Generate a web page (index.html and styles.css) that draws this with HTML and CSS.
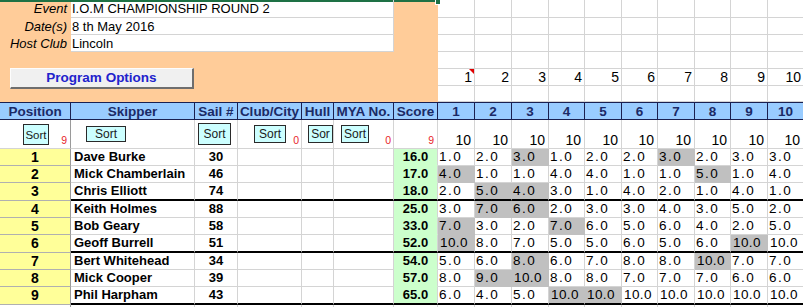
FILE: index.html
```html
<!DOCTYPE html>
<html lang="en">
<head>
<meta charset="utf-8">
<title>I.O.M Championship Round 2</title>
<link rel="stylesheet" href="styles.css">
</head>
<body>
<div class="sheet">
  <div class="lbl sel">Event</div><div class="val sel">I.O.M CHAMPIONSHIP ROUND 2</div><div class="or c7 sel"></div>
  <div></div><div></div><div></div><div></div><div></div><div></div><div></div><div></div><div></div><div></div>
  <div class="lbl">Date(s)</div><div class="val">8 th May 2016</div>
  <div></div><div></div><div></div><div></div><div></div><div></div><div></div><div></div><div></div><div></div>
  <div class="lbl">Host Club</div><div class="val">Lincoln</div>
  <div></div><div></div><div></div><div></div><div></div><div></div><div></div><div></div><div></div><div></div>
  <div class="or bot"><button type="button" class="btn">Program Options</button></div>
  <div></div><div></div><div></div><div></div><div></div><div></div><div></div><div></div><div></div><div></div>
  <div class="rn cm">1</div><div class="rn">2</div><div class="rn">3</div><div class="rn">4</div><div class="rn">5</div><div class="rn">6</div><div class="rn">7</div><div class="rn">8</div><div class="rn">9</div><div class="rn">10</div>
  <div></div><div></div><div></div><div></div><div></div><div></div><div></div><div></div><div></div><div></div>

  <div class="row hd">
    <div>Position</div><div>Skipper</div><div>Sail #</div><div>Club/City</div><div>Hull</div><div>MYA No.</div><div>Score</div>
    <div>1</div><div>2</div><div>3</div><div>4</div><div>5</div><div>6</div><div>7</div><div>8</div><div>9</div><div>10</div>
  </div>

  <div class="row st">
    <div class="pc"><span class="sb b1">Sort</span><span class="rd">9</span></div>
    <div><span class="sb b2">Sort</span></div>
    <div><span class="sb b3">Sort</span></div>
    <div><span class="sb b4">Sort</span><span class="rd r2">0</span></div>
    <div><span class="sb b5">Sor</span></div>
    <div><span class="sb b6">Sort</span><span class="rd r2">0</span></div>
    <div><span class="rd">9</span></div>
    <div class="tn">10</div><div class="tn">10</div><div class="tn">10</div><div class="tn">10</div><div class="tn">10</div><div class="tn">10</div><div class="tn">10</div><div class="tn">10</div><div class="tn">10</div><div class="tn">10</div>
  </div>

  <div class="row dr">
    <div class="pos">1</div><div class="nm">Dave Burke</div><div class="sl">30</div><div></div><div></div><div></div><div class="sc">16.0</div>
    <div class="r">1.0</div><div class="r">2.0</div><div class="r gy">3.0</div><div class="r">1.0</div><div class="r">2.0</div><div class="r">2.0</div><div class="r gy">3.0</div><div class="r">2.0</div><div class="r">3.0</div><div class="r">3.0</div>
  </div>
  <div class="row dr">
    <div class="pos">2</div><div class="nm">Mick Chamberlain</div><div class="sl">46</div><div></div><div></div><div></div><div class="sc">17.0</div>
    <div class="r gy">4.0</div><div class="r">1.0</div><div class="r">1.0</div><div class="r">4.0</div><div class="r">4.0</div><div class="r">1.0</div><div class="r">1.0</div><div class="r gy">5.0</div><div class="r">1.0</div><div class="r">4.0</div>
  </div>
  <div class="row dr tk">
    <div class="pos">3</div><div class="nm">Chris Elliott</div><div class="sl">74</div><div></div><div></div><div></div><div class="sc">18.0</div>
    <div class="r">2.0</div><div class="r gy">5.0</div><div class="r gy">4.0</div><div class="r">3.0</div><div class="r">1.0</div><div class="r">4.0</div><div class="r">2.0</div><div class="r">1.0</div><div class="r">4.0</div><div class="r">1.0</div>
  </div>
  <div class="row dr">
    <div class="pos">4</div><div class="nm">Keith Holmes</div><div class="sl">88</div><div></div><div></div><div></div><div class="sc">25.0</div>
    <div class="r">3.0</div><div class="r gy">7.0</div><div class="r gy">6.0</div><div class="r">2.0</div><div class="r">3.0</div><div class="r">3.0</div><div class="r">4.0</div><div class="r">3.0</div><div class="r">5.0</div><div class="r">2.0</div>
  </div>
  <div class="row dr">
    <div class="pos">5</div><div class="nm">Bob Geary</div><div class="sl">58</div><div></div><div></div><div></div><div class="sc">33.0</div>
    <div class="r gy">7.0</div><div class="r">3.0</div><div class="r">2.0</div><div class="r gy">7.0</div><div class="r">6.0</div><div class="r">5.0</div><div class="r">6.0</div><div class="r">4.0</div><div class="r">2.0</div><div class="r">5.0</div>
  </div>
  <div class="row dr tk">
    <div class="pos">6</div><div class="nm">Geoff Burrell</div><div class="sl">51</div><div></div><div></div><div></div><div class="sc">52.0</div>
    <div class="r w gy">10.0</div><div class="r">8.0</div><div class="r">7.0</div><div class="r">5.0</div><div class="r">5.0</div><div class="r">6.0</div><div class="r">5.0</div><div class="r">6.0</div><div class="r w gy">10.0</div><div class="r w">10.0</div>
  </div>
  <div class="row dr">
    <div class="pos">7</div><div class="nm">Bert Whitehead</div><div class="sl">34</div><div></div><div></div><div></div><div class="sc">54.0</div>
    <div class="r">5.0</div><div class="r">6.0</div><div class="r gy">8.0</div><div class="r">6.0</div><div class="r">7.0</div><div class="r">8.0</div><div class="r">8.0</div><div class="r w gy">10.0</div><div class="r">7.0</div><div class="r">7.0</div>
  </div>
  <div class="row dr">
    <div class="pos">8</div><div class="nm">Mick Cooper</div><div class="sl">39</div><div></div><div></div><div></div><div class="sc">57.0</div>
    <div class="r">8.0</div><div class="r gy">9.0</div><div class="r w gy">10.0</div><div class="r">8.0</div><div class="r">8.0</div><div class="r">7.0</div><div class="r">7.0</div><div class="r">7.0</div><div class="r">6.0</div><div class="r">6.0</div>
  </div>
  <div class="row dr tk">
    <div class="pos">9</div><div class="nm">Phil Harpham</div><div class="sl">43</div><div></div><div></div><div></div><div class="sc">65.0</div>
    <div class="r">6.0</div><div class="r">4.0</div><div class="r">5.0</div><div class="r w gy">10.0</div><div class="r w gy">10.0</div><div class="r w">10.0</div><div class="r w">10.0</div><div class="r w">10.0</div><div class="r w">10.0</div><div class="r w">10.0</div>
  </div>
  <div class="row">
    <div class="pe"></div><div></div><div></div><div></div><div></div><div></div><div></div>
    <div></div><div></div><div></div><div></div><div></div><div></div><div></div><div></div><div></div><div></div>
  </div>
</div>
</body>
</html>
```
FILE: styles.css
```css
html, body {
  margin: 0;
  padding: 0;
  background: #fff;
  overflow: hidden;
}

body {
  font-family: "Liberation Sans", Arial, sans-serif;
  font-size: 13px;
  color: #000;
}

.sheet {
  display: grid;
  width: 804px;
  grid-template-columns: 71px 124px 43px 64px 32px 60px 44px 37px 37px 37px 36px 37px 36px 37px 36px 37px 36px;
  grid-template-rows: 18px 17px 17px 17px 17px 16px 18px 29px 17px 17px 18px 17px 17px 18px 17px 17px 18px 10px;
}

.row {
  display: contents;
}

.sheet > :not(.row),
.row > * {
  box-sizing: border-box;
  min-width: 0;
  overflow: hidden;
  white-space: nowrap;
  line-height: 16px;
  border-right: 1px solid #d4d4d4;
  border-bottom: 1px solid #d4d4d4;
}

/* ---------- top panel ---------- */
.sheet > .lbl {
  background: #ffcc99;
  border: none;
  text-align: right;
  font-style: italic;
  padding-right: 4px;
  line-height: 18px;
}

.sheet > .val {
  grid-column: span 5;
  background: #fff;
  padding-left: 1px;
  line-height: 18px;
}

.sheet > .or {
  background: #ffcc99;
  border: none;
}

.sheet > .c7 {
  grid-row: span 3;
  position: relative;
  overflow: visible;
}

.c7::after {
  content: "";
  position: absolute;
  top: 0;
  right: -3px;
  width: 4px;
  height: 4px;
  background: #1e7145;
  border: 1px solid #fff;
  border-top: none;
}

.sel {
  box-shadow: inset 0 2px 0 #1e7145;
}

.sheet > .bot {
  grid-column: span 7;
  grid-row: span 3;
}

.btn {
  display: block;
  box-sizing: border-box;
  margin: 16px 0 0 10px;
  width: 184px;
  height: 21px;
  padding: 0;
  background: #f0f0f0;
  border: none;
  border-top: 1px solid #fdfdfd;
  border-left: 1px solid #fdfdfd;
  border-right: 2px solid #6e6e6e;
  border-bottom: 2px solid #6e6e6e;
  font-family: "Liberation Sans", Arial, sans-serif;
  font-size: 13.5px;
  font-weight: bold;
  line-height: 18px;
  color: #2222cc;
  text-align: center;
}

.sheet > .rn {
  text-align: right;
  padding-right: 2px;
  font-size: 14px;
}

.sheet > .cm {
  position: relative;
}

.cm::after {
  content: "";
  position: absolute;
  top: 0;
  right: 0;
  border-top: 5px solid #e00000;
  border-left: 5px solid transparent;
}

/* ---------- header row ---------- */
.hd > * {
  background: #99ccff;
  border-top: 1px solid #1a2050;
  border-bottom: 1px solid #1a2050;
  border-right: 1px solid #1a2050;
  font-weight: bold;
  font-size: 13.5px;
  line-height: 17px;
  color: #1b2a66;
  text-align: center;
}

/* ---------- sort row ---------- */
.st > * {
  display: flex;
  align-items: flex-start;
}

.st > .pc {
  border-right-color: #9a9a9a;
}

.sb {
  box-sizing: border-box;
  flex: none;
  display: flex;
  align-items: center;
  justify-content: center;
  overflow: hidden;
  background: #ccffff;
  border: 1px solid #2a2a2a;
  font-size: 12px;
  color: #1a1a1a;
}

.b1 { margin: 4px 0 0 23px; width: 26px; height: 21px; font-size: 11.5px; }
.b2 { margin: 6px 0 0 15px; width: 40px; height: 16px; }
.b3 { margin: 3px 0 0 3px; width: 33px; height: 22px; }
.b4 { margin: 5px 0 0 16px; width: 32px; height: 18px; }
.b5 { margin: 5px 0 0 6px; width: 25px; height: 18px; }
.b6 { margin: 5px 0 0 7px; width: 28px; height: 18px; }

.rd {
  margin-left: auto;
  align-self: flex-end;
  padding: 0 3px 2px 0;
  font-size: 10.5px;
  line-height: 12px;
  color: #e8262a;
}

.rd.r2 {
  padding-right: 2px;
}

.st > .tn {
  align-items: flex-end;
  justify-content: flex-end;
  padding-right: 3px;
  font-size: 14px;
}

/* ---------- data rows ---------- */
.dr > .pos {
  background: #ffff99;
  border-right-color: #9a9a9a;
  border-bottom-color: #b0b0b0;
  text-align: center;
  font-weight: bold;
  font-size: 14px;
}

.row > .pe {
  border-right-color: #9a9a9a;
}

.dr > .nm {
  padding-left: 3px;
  font-weight: bold;
}

.dr > .sl {
  text-align: center;
  font-weight: bold;
}

.dr > .sc {
  background: #ccffcc;
  border-bottom-color: #ccffcc;
  text-align: center;
  font-weight: bold;
}

.dr > .r {
  padding-left: 1px;
  font-size: 13.5px;
  letter-spacing: 1.5px;
}

.dr > .w {
  padding-left: 2px;
  letter-spacing: 0.4px;
}

.dr > .gy {
  background: #c0c0c0;
  border-right-color: #c0c0c0;
  border-bottom-color: #c0c0c0;
}

.tk > :not(.pos) {
  border-bottom: 2px solid #000;
}
```
